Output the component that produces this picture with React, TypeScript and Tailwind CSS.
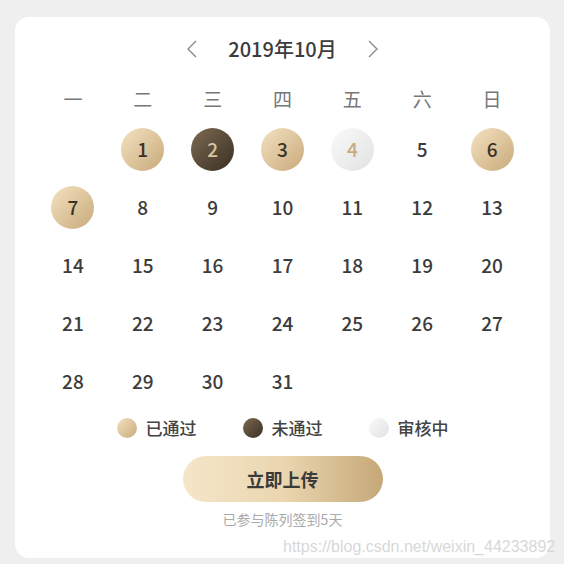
type Status = 'pass' | 'fail' | 'pending' | 'none';

const weekdays = ['一', '二', '三', '四', '五', '六', '日'];

const statusOf: Record<number, Status> = {
  1: 'pass',
  2: 'fail',
  3: 'pass',
  4: 'pending',
  6: 'pass',
  7: 'pass',
};

const circleClass: Record<Status, string> = {
  pass: 'bg-gradient-to-br from-[#f3e2c1] to-[#c9aa7b] text-[#3a3226]',
  fail: 'bg-gradient-to-br from-[#7d6b53] to-[#3b3024] text-[#d9c39d]',
  pending: 'bg-gradient-to-br from-[#fafafa] to-[#e2e2e2] text-[#c8ab7e]',
  none: 'text-[#3c3c3c]',
};

function Day({ day }: { day: number | null }) {
  if (day === null) return <div className="h-[58px]" />;
  const status = statusOf[day] ?? 'none';
  return (
    <div className="flex h-[58px] items-center justify-center">
      <div
        className={`flex h-[43px] w-[43px] items-center justify-center rounded-full text-[19px] font-medium ${circleClass[status]}`}
      >
        {day}
      </div>
    </div>
  );
}

function Legend({ label, dot }: { label: string; dot: string }) {
  return (
    <div className="flex items-center gap-[9px]">
      <span className={`h-[20px] w-[20px] rounded-full ${dot}`} />
      <span className="text-[17px] font-medium text-[#444]">{label}</span>
    </div>
  );
}

function Chevron({ dir }: { dir: 'left' | 'right' }) {
  return (
    <svg width="12" height="18" viewBox="0 0 12 18" fill="none" stroke="#8a8a8a" strokeWidth="1.4">
      {dir === 'left' ? <path d="M10 1 L2 9 L10 17" /> : <path d="M2 1 L10 9 L2 17" />}
    </svg>
  );
}

export default function App() {
  // October 2019 starts on Tuesday
  const cells: (number | null)[] = [null];
  for (let d = 1; d <= 31; d++) cells.push(d);

  return (
    <div
      className="relative h-[564px] w-[564px] bg-[#efefef] px-[15px] pt-[17px]"
      style={{ fontFamily: '"Noto Sans CJK SC", "Noto Sans", sans-serif' }}
    >
      <div className="h-[541px] w-[535px] rounded-[14px] bg-white px-[23px] pt-[17px]">
        <div className="flex h-[30px] items-center justify-center gap-[30px] text-[#3c3c3c]">
          <Chevron dir="left" />
          <span className="text-[20px] font-medium">2019年10月</span>
          <Chevron dir="right" />
        </div>

        <div className="mt-[20px] grid h-[30px] grid-cols-7 items-center text-center text-[19px] text-[#777]">
          {weekdays.map((w) => (
            <span key={w}>{w}</span>
          ))}
        </div>

        <div className="mt-[6px] grid grid-cols-7">
          {cells.map((d, i) => (
            <Day key={i} day={d} />
          ))}
        </div>

        <div className="mt-[8px] flex h-[20px] items-center justify-center gap-[46px]">
          <Legend label="已通过" dot="bg-gradient-to-br from-[#f3e2c1] to-[#c9aa7b]" />
          <Legend label="未通过" dot="bg-gradient-to-br from-[#7d6b53] to-[#3b3024]" />
          <Legend label="审核中" dot="bg-gradient-to-br from-[#fafafa] to-[#e2e2e2]" />
        </div>

        <div className="mt-[18px] flex justify-center">
          <button className="h-[46px] w-[200px] rounded-full bg-gradient-to-r from-[#f5e6c9] via-[#ead6b0] to-[#c6a878] text-[18px] font-bold text-[#3a3a3a]">
            立即上传
          </button>
        </div>

        <p className="mt-[8px] text-center text-[14px] leading-[18px] text-[#aaa]">已参与陈列签到5天</p>
      </div>

      <span
        className="absolute left-[283px] top-[535px] text-[16px] text-[#d8d8d8]"
        style={{ fontFamily: '"Liberation Sans", Arial, sans-serif' }}
      >
        https://blog.csdn.net/weixin_44233892
      </span>
    </div>
  );
}
